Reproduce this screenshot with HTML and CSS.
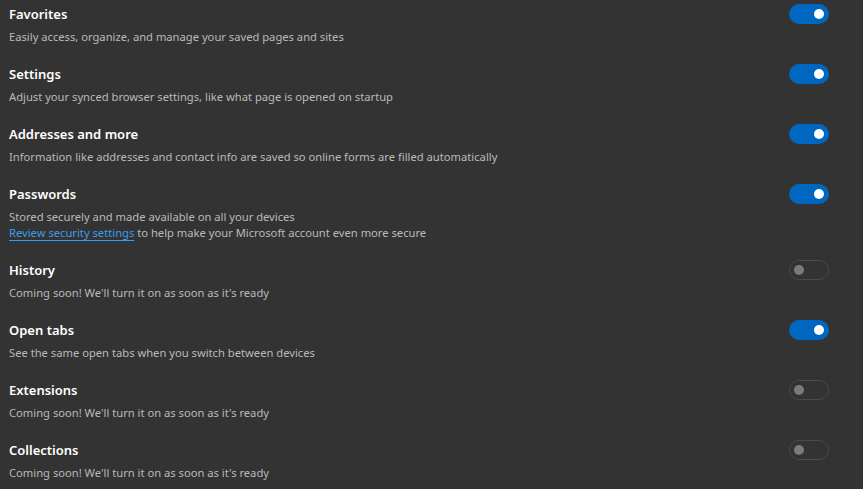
FILE: index.html
```html
<!DOCTYPE html>
<html lang="en">
<head>
<meta charset="utf-8">
<link rel="stylesheet" href="styles.css">
</head>
<body>
<div class="list">
  <div class="row">
    <div class="text">
      <div class="title">Favorites</div>
      <div class="desc">Easily access, organize, and manage your saved pages and sites</div>
    </div>
    <span class="toggle on"><span class="knob"></span></span>
  </div>
  <div class="row">
    <div class="text">
      <div class="title">Settings</div>
      <div class="desc">Adjust your synced browser settings, like what page is opened on startup</div>
    </div>
    <span class="toggle on"><span class="knob"></span></span>
  </div>
  <div class="row">
    <div class="text">
      <div class="title">Addresses and more</div>
      <div class="desc">Information like addresses and contact info are saved so online forms are filled automatically</div>
    </div>
    <span class="toggle on"><span class="knob"></span></span>
  </div>
  <div class="row">
    <div class="text">
      <div class="title">Passwords</div>
      <div class="desc">Stored securely and made available on all your devices<br><a class="link" href="#">Review security settings</a> to help make your Microsoft account even more secure</div>
    </div>
    <span class="toggle on"><span class="knob"></span></span>
  </div>
  <div class="row">
    <div class="text">
      <div class="title">History</div>
      <div class="desc">Coming soon! We'll turn it on as soon as it's ready</div>
    </div>
    <span class="toggle off"><span class="knob"></span></span>
  </div>
  <div class="row">
    <div class="text">
      <div class="title">Open tabs</div>
      <div class="desc">See the same open tabs when you switch between devices</div>
    </div>
    <span class="toggle on"><span class="knob"></span></span>
  </div>
  <div class="row">
    <div class="text">
      <div class="title">Extensions</div>
      <div class="desc">Coming soon! We'll turn it on as soon as it's ready</div>
    </div>
    <span class="toggle off"><span class="knob"></span></span>
  </div>
  <div class="row">
    <div class="text">
      <div class="title">Collections</div>
      <div class="desc">Coming soon! We'll turn it on as soon as it's ready</div>
    </div>
    <span class="toggle off"><span class="knob"></span></span>
  </div>
</div>
</body>
</html>
```

FILE: styles.css
```css
html, body {
  margin: 0;
  padding: 0;
  background: #333333;
  height: 100%;
}
body {
  font-family: "Noto Sans", "Open Sans", sans-serif;
  color: #ffffff;
  overflow: hidden;
}
.list {
  display: flex;
  flex-direction: column;
  padding: 4px 34px 0 9px;
}
.row {
  display: flex;
  justify-content: space-between;
  align-items: flex-start;
  padding-bottom: 19px;
}
.title {
  font-size: 13px;
  font-weight: 600;
  line-height: 20px;
}
.desc {
  margin-top: 5px;
  font-size: 11.2px;
  line-height: 16px;
  color: #bababa;
}
.link {
  color: #3d9cea;
  text-decoration: underline;
  text-underline-offset: 3px;
}
.toggle {
  flex: none;
  width: 40px;
  height: 20px;
  border-radius: 10px;
  box-sizing: border-box;
  display: flex;
  align-items: center;
  padding: 0 5px;
}
.toggle.on {
  background: #0067c0;
  justify-content: flex-end;
}
.toggle.off {
  border: 1px solid #4a4a4a;
  justify-content: flex-start;
  padding: 0 4px;
}
.knob {
  width: 10px;
  height: 10px;
  border-radius: 50%;
  background: #ffffff;
}
.toggle.off .knob {
  background: #7a7a7a;
}
```
